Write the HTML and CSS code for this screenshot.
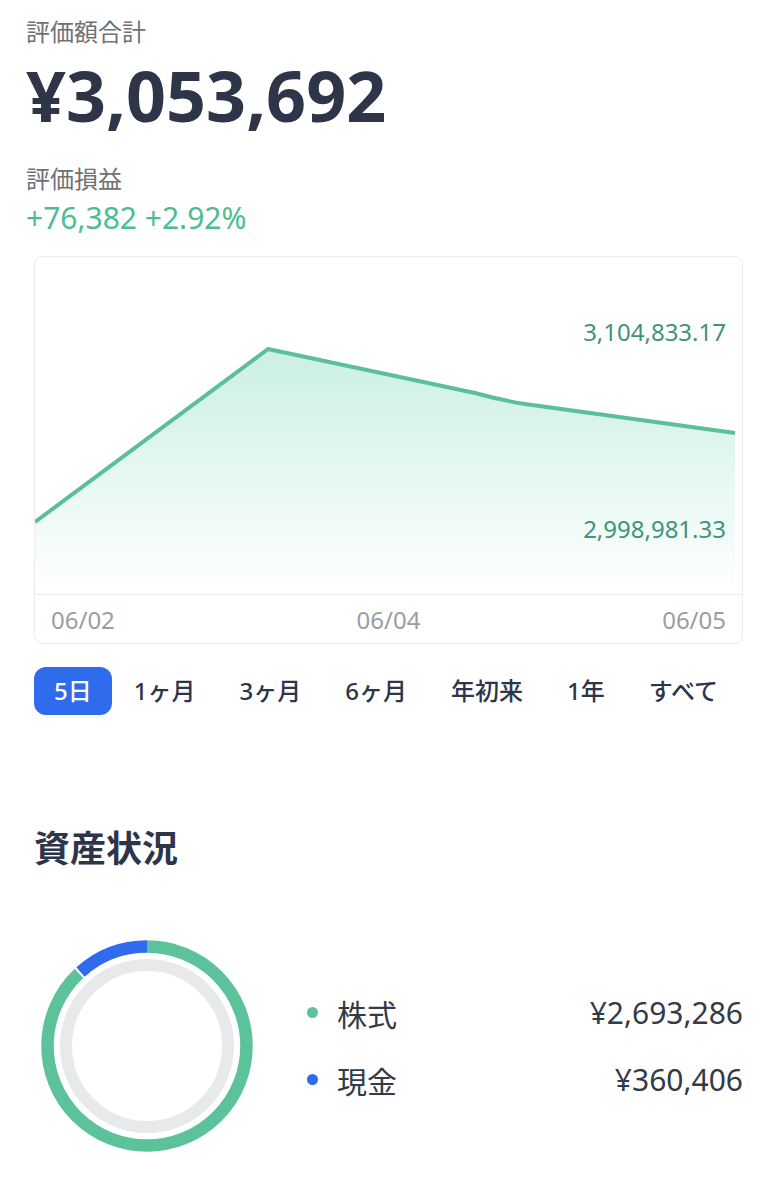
FILE: index.html
```html
<!DOCTYPE html>
<html lang="ja">
<head>
    <meta charset="UTF-8">
    <title>資産</title>
    <link rel="stylesheet" href="styles.css">
</head>
<body>
    <div class="summary">
        <p class="label">評価額合計</p>
        <p class="total">¥3,053,692</p>
        <p class="label pl-label">評価損益</p>
        <p class="pl">+76,382 +2.92%</p>
    </div>
    <div class="main">
        <div class="chart">
            <div class="plot">
                <svg width="707" height="337" viewBox="0 0 707 337">
                    <defs>
                        <linearGradient id="fade" x1="0" y1="92" x2="0" y2="337" gradientUnits="userSpaceOnUse">
                            <stop offset="0" stop-color="#52cc9f" stop-opacity="0.3"/>
                            <stop offset="1" stop-color="#52cc9f" stop-opacity="0"/>
                        </linearGradient>
                    </defs>
                    <path d="M0 265 L233 92 L440 136 Q465 143 490 147 L700 176 L700 337 L0 337 Z" fill="url(#fade)"/>
                    <path d="M0 265 L233 92 L440 136 Q465 143 490 147 L700 176" fill="none" stroke="#5bbf99" stroke-width="4" stroke-linejoin="round"/>
                </svg>
                <span class="val val-max">3,104,833.17</span>
                <span class="val val-min">2,998,981.33</span>
            </div>
            <div class="axis">
                <span>06/02</span>
                <span>06/04</span>
                <span>06/05</span>
            </div>
        </div>
        <ul class="tabs">
            <li class="selected">5日</li>
            <li>1ヶ月</li>
            <li>3ヶ月</li>
            <li>6ヶ月</li>
            <li>年初来</li>
            <li>1年</li>
            <li>すべて</li>
        </ul>
        <h2 class="title">資産状況</h2>
        <div class="assets">
            <svg class="donut" width="212" height="212" viewBox="0 0 212 212">
                <circle cx="106" cy="106" r="81" fill="none" stroke="#e8e9eb" stroke-width="12"/>
                <g transform="rotate(-90 106 106)">
                    <circle cx="106" cy="106" r="99.5" fill="none" stroke="#5cc29c" stroke-width="12.5"
                        stroke-dasharray="549.4 625.2"/>
                    <circle cx="106" cy="106" r="99.5" fill="none" stroke="#2f6aef" stroke-width="12.5"
                        stroke-dasharray="73.8 625.2" stroke-dashoffset="-551.4"/>
                </g>
            </svg>
            <ul class="legend">
                <li><i class="dot stock"></i><span class="name">株式</span><span class="amount">¥2,693,286</span></li>
                <li><i class="dot cash"></i><span class="name">現金</span><span class="amount">¥360,406</span></li>
            </ul>
        </div>
    </div>
</body>
</html>
```

FILE: styles.css
```css
*{
    margin: 0;
    padding: 0;
}
body{
    font-family: "Noto Sans", "Noto Sans CJK JP", sans-serif;
    color: #2e3548;
    background: #fff;
    width: 777px;
}
.summary{
    padding: 16px 0 0 26px;
}
.label{
    font-size: 24px;
    line-height: 32px;
    color: #6f7176;
}
.total{
    margin-top: 12px;
    font-size: 70px;
    line-height: 70px;
    font-weight: 700;
    color: #2e3548;
}
.pl-label{
    margin-top: 33px;
}
.pl{
    margin-top: 5px;
    font-size: 30px;
    line-height: 36px;
    color: #4dbd91;
}
.main{
    padding: 20px 34px 0;
}
.chart{
    border: 1px solid #ececec;
    border-radius: 8px;
    overflow: hidden;
}
.plot{
    position: relative;
    height: 337px;
    border-bottom: 1px solid #ececec;
}
.plot svg{
    display: block;
}
.val{
    position: absolute;
    right: 16px;
    font-size: 24px;
    line-height: 30px;
    color: #3f9479;
}
.val-max{
    top: 60px;
}
.val-min{
    top: 257px;
}
.axis{
    height: 48px;
    display: flex;
    justify-content: space-between;
    align-items: center;
    padding: 0 16px;
    font-size: 24px;
    color: #9b9da1;
}
.tabs{
    margin-top: 23px;
    display: flex;
    list-style: none;
}
.tabs li{
    flex-shrink: 0;
    white-space: nowrap;
    height: 48px;
    line-height: 48px;
    padding: 0 22px;
    font-size: 24px;
    font-weight: 500;
    color: #2e3548;
    border-radius: 12px;
}
.tabs .selected{
    padding: 0 20px;
    background: #2f6bed;
    color: #fff;
}
.title{
    margin-top: 110px;
    font-size: 36px;
    line-height: 48px;
    font-weight: 700;
    color: #2e3548;
}
.assets{
    margin-top: 67px;
    display: flex;
    align-items: center;
}
.donut{
    display: block;
    margin-left: 7px;
}
.legend{
    flex: 1;
    margin-left: 54px;
    list-style: none;
}
.legend li{
    display: flex;
    align-items: center;
    height: 40px;
    font-size: 30px;
    color: #333a48;
}
.legend li + li{
    margin-top: 27px;
}
.dot{
    width: 11px;
    height: 11px;
    border-radius: 50%;
    margin-right: 19px;
}
.stock{
    background: #5cc29c;
}
.cash{
    background: #2f6aef;
}
.amount{
    margin-left: auto;
}
```
